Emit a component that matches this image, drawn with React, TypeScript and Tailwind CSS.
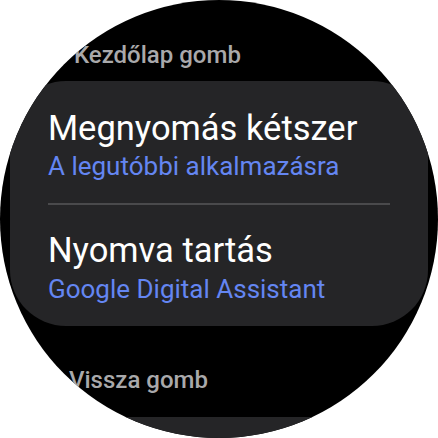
export default function App() {
  return (
    <div className="w-[438px] h-[438px] bg-white" style={{ fontFamily: "Roboto, 'Noto Sans', sans-serif" }}>
      <div className="w-[438px] h-[438px] rounded-full bg-black overflow-hidden flex flex-col items-center">
        {/* Home button section */}
        <div className="w-[418px] pt-[41px] pl-[64px] text-[24px] leading-[28px] font-medium text-[#a9a9ab]">
          Kezdőlap gomb
        </div>
        <div className="mt-[12px] w-[418px] rounded-[56px] bg-[#252527] px-[38px] pt-[27px] pb-[22px]">
          <div className="text-[34.5px] leading-[40px] text-white">Megnyomás kétszer</div>
          <div className="mt-[3px] text-[26px] leading-[30px] text-[#6486f2]">A legutóbbi alkalmazásra</div>
          <div className="mt-[22px] h-[2px] bg-[#4a4a4c]" />
          <div className="mt-[25px] text-[34.5px] leading-[40px] text-white">Nyomva tartás</div>
          <div className="mt-[4px] text-[26px] leading-[30px] text-[#6486f2]">Google Digital Assistant</div>
        </div>
        {/* Back button section */}
        <div className="mt-[40px] w-[418px] pl-[59px] text-[24px] leading-[28px] font-medium text-[#a9a9ab]">
          Vissza gomb
        </div>
        <div className="mt-[23px] w-[418px] h-[120px] shrink-0 rounded-[56px] bg-[#252527]" />
      </div>
    </div>
  );
}
